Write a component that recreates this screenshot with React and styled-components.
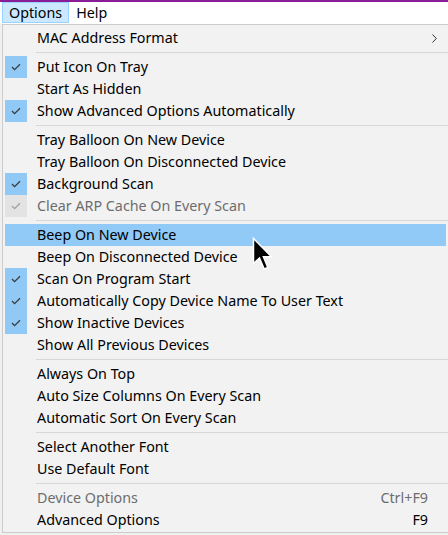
import React from 'react'
import styled, { createGlobalStyle } from 'styled-components'

const GlobalStyle = createGlobalStyle`
  html, body {
    margin: 0;
    padding: 0;
    background: #f0f0f0;
    overflow: hidden;
  }
  body {
    font-family: 'Noto Sans', 'Open Sans', sans-serif;
    font-size: 14.3px;
    color: #000;
  }
`

const Window = styled.div`
  position: relative;
  width: 448px;
  height: 535px;
  overflow: hidden;
  border-top: 2px solid #8b1c98;
  box-sizing: border-box;
`

const MenuBar = styled.div`
  display: flex;
  height: 22px;
  padding-left: 2px;
  background: #fff;
`

const BarItem = styled.div`
  display: flex;
  align-items: center;
  height: 21px;
  padding: 2px 6px 0;
  box-sizing: border-box;
  border: 1px solid ${(p) => (p.$active ? '#99d1ff' : 'transparent')};
  background: ${(p) => (p.$active ? '#cce8ff' : 'transparent')};
  line-height: 1;
`

const Dropdown = styled.div`
  margin-left: 2px;
  width: 460px;
  border: 1px solid #cccccc;
  border-right: none;
  background: #f2f2f2;
  padding: 2px 0 1px;
`

const Row = styled.div`
  display: grid;
  grid-template-columns: 22px 1fr auto 18px;
  column-gap: 10px;
  align-items: center;
  height: 22px;
  margin: 0 2px;
  width: 441px;
  background: ${(p) => (p.$hover ? '#91c9f7' : 'transparent')};
  color: ${(p) => (p.$disabled ? '#6d6d6d' : '#000')};
  white-space: nowrap;
`

const CheckCell = styled.div`
  display: flex;
  align-items: center;
  justify-content: center;
  width: 22px;
  height: 22px;
  background: ${(p) =>
    !p.$checked ? 'transparent' : p.$disabled ? '#e3e3e3' : '#90c8f6'};
  color: ${(p) => (p.$disabled ? '#a0a0a0' : '#3c3c3c')};
`

const Label = styled.span`
  line-height: 22px;
`

const Shortcut = styled.span`
  line-height: 22px;
  text-align: right;
  margin-right: -10px;
`

const Arrow = styled.div`
  display: flex;
  align-items: center;
  padding-left: 4px;
`

const Separator = styled.div`
  height: 7px;
  display: flex;
  align-items: center;
  margin-left: 33px;

  &::after {
    content: '';
    flex: 1;
    height: 1px;
    background: #d7d7d7;
  }
`

const Cursor = styled.svg`
  position: absolute;
  left: 252px;
  top: 235px;
`

const items = [
  { label: 'MAC Address Format', sub: true },
  '-',
  { label: 'Put Icon On Tray', checked: true },
  { label: 'Start As Hidden' },
  { label: 'Show Advanced Options Automatically', checked: true },
  '-',
  { label: 'Tray Balloon On New Device' },
  { label: 'Tray Balloon On Disconnected Device' },
  { label: 'Background Scan', checked: true },
  { label: 'Clear ARP Cache On Every Scan', checked: true, disabled: true },
  '-',
  { label: 'Beep On New Device', hover: true },
  { label: 'Beep On Disconnected Device' },
  { label: 'Scan On Program Start', checked: true },
  { label: 'Automatically Copy Device Name To User Text', checked: true },
  { label: 'Show Inactive Devices', checked: true },
  { label: 'Show All Previous Devices' },
  '-',
  { label: 'Always On Top' },
  { label: 'Auto Size Columns On Every Scan' },
  { label: 'Automatic Sort On Every Scan' },
  '-',
  { label: 'Select Another Font' },
  { label: 'Use Default Font' },
  '-',
  { label: 'Device Options', shortcut: 'Ctrl+F9', disabled: true },
  { label: 'Advanced Options', shortcut: 'F9' },
]

const Check = () => (
  <svg width="10" height="8" viewBox="0 0 10 8">
    <polyline points="1,4 3.6,6.6 9,1.2" fill="none" stroke="currentColor" strokeWidth="1.3" />
  </svg>
)

const App = () => {
  return (
    <Window>
      <GlobalStyle />
      <MenuBar>
        <BarItem $active>Options</BarItem>
        <BarItem>Help</BarItem>
      </MenuBar>
      <Dropdown>
        {items.map((item, i) =>
          item === '-' ? (
            <Separator key={i} />
          ) : (
            <Row key={i} $hover={item.hover} $disabled={item.disabled}>
              <CheckCell $checked={item.checked} $disabled={item.disabled}>
                {item.checked && <Check />}
              </CheckCell>
              <Label>{item.label}</Label>
              <Shortcut>{item.shortcut}</Shortcut>
              <Arrow>
                {item.sub && (
                  <svg width="5" height="9" viewBox="0 0 5 9">
                    <polyline points="0.5,0.5 4.3,4.5 0.5,8.5" fill="none" stroke="#333" strokeWidth="1" />
                  </svg>
                )}
              </Arrow>
            </Row>
          )
        )}
      </Dropdown>
      <Cursor width="22" height="35" viewBox="0 0 22 35">
        <path
          d="M1.5 1.5 L1.5 26.5 L7.5 21 L12.2 32 L15.8 30.5 L11.4 19.8 L19.5 19.8 Z"
          fill="#000"
          stroke="#fff"
          strokeWidth="1.5"
          strokeLinejoin="miter"
        />
      </Cursor>
    </Window>
  )
}

export default App
